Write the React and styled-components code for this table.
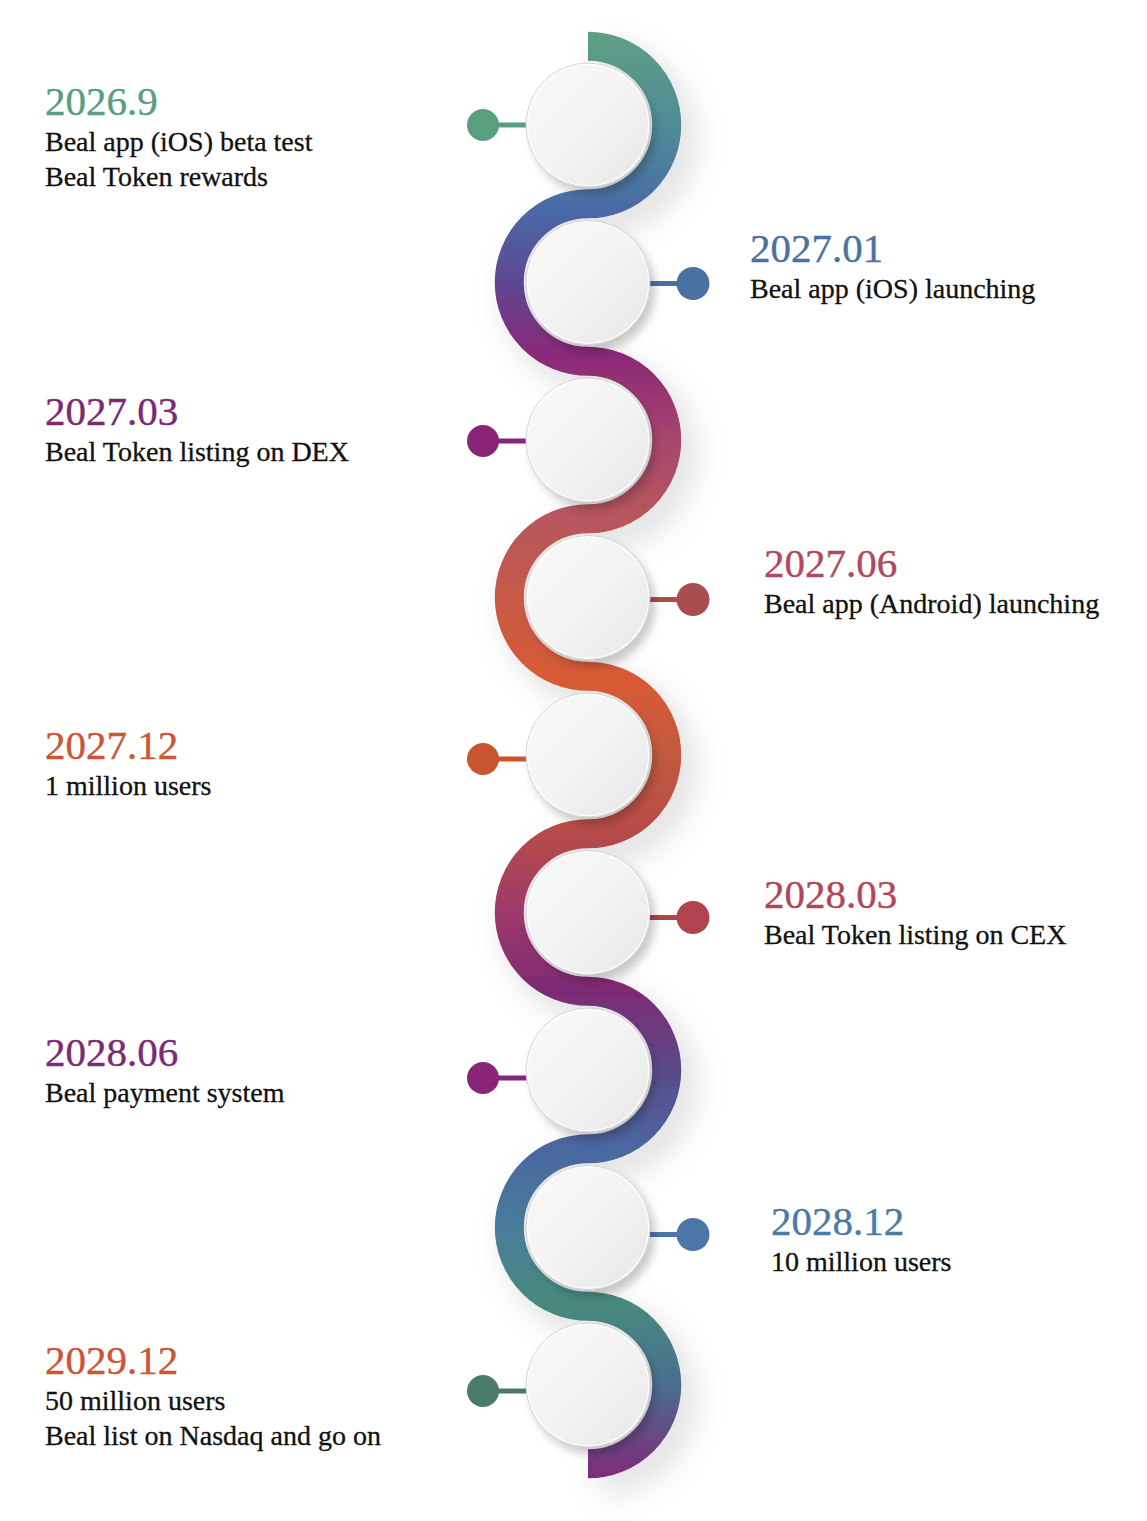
import React from 'react';
import styled, { createGlobalStyle } from 'styled-components';

const GlobalStyle = createGlobalStyle`
  html, body {
    margin: 0;
    padding: 0;
    background: #ffffff;
  }
  body {
    font-family: "Liberation Serif", "Times New Roman", serif;
    color: #111111;
  }
`;

const STEP = 157.5;
const TOP = 125;
const CX = 148;
const R = STEP / 2;

// one entry per circle on the ribbon, top to bottom
const milestones = [
  { year: '2026.9', lines: ['Beal app (iOS) beta test', 'Beal Token rewards'], color: '#5a9e80', dot: '#5a9e80', shift: 32, dotY: 0 },
  { year: '2027.01', lines: ['Beal app (iOS) launching'], color: '#4a72a0', dot: '#4873a0', shift: 21, indent: 10, dotY: 1 },
  { year: '2027.03', lines: ['Beal Token listing on DEX'], color: '#7d2a74', dot: '#8a2478', shift: 27, dotY: 1 },
  { year: '2027.06', lines: ['Beal app (Android) launching'], color: '#b04a5c', dot: '#a84e50', shift: 21, indent: 24, dotY: 2 },
  { year: '2027.12', lines: ['1 million users'], color: '#cc5535', dot: '#c8552f', shift: 46, dotY: 4 },
  { year: '2028.03', lines: ['Beal Token listing on CEX'], color: '#b0465a', dot: '#b0444e', shift: 37, indent: 24, dotY: 5 },
  { year: '2028.06', lines: ['Beal payment system'], color: '#7d2a74', dot: '#8a2478', shift: 38, dotY: 8 },
  { year: '2028.12', lines: ['10 million users'], color: '#4a7aa8', dot: '#4a76a8', shift: 49, indent: 31, dotY: 7 },
  { year: '2029.12', lines: ['50 million users', 'Beal list on Nasdaq and go on'], color: '#cc5535', dot: '#4a7a6a', shift: 31, dotY: 6 },
];

const ribbonStops = [
  [40, '#5e9e84'],
  [130, '#4f8a98'],
  [210, '#4a6aa6'],
  [283, '#5e4692'],
  [355, '#8a2878'],
  [440, '#a6476c'],
  [520, '#b6585c'],
  [598, '#c65a48'],
  [680, '#d85a35'],
  [755, '#c25a3e'],
  [830, '#b64c48'],
  [908, '#a03a6a'],
  [990, '#7e2a74'],
  [1068, '#5a4a88'],
  [1150, '#4a68a0'],
  [1227, '#4a7c9c'],
  [1300, '#4a8a7c'],
  [1385, '#4a6e90'],
  [1480, '#80287a'],
];

const Page = styled.main`
  display: grid;
  grid-template-columns: 440px 300px 1fr;
  grid-template-rows: repeat(9, ${STEP}px);
  padding: 46px 0 58px;
  width: 1147px;
  box-sizing: border-box;
`;

const Track = styled.svg`
  grid-column: 2;
  grid-row: 1 / -1;
  width: 300px;
  height: ${STEP * 9}px;
  overflow: visible;
  display: block;
`;

const Entry = styled.div`
  grid-column: ${(p) => (p.$side === 'left' ? 1 : 3)};
  grid-row: ${(p) => p.$row};
  margin-top: ${(p) => p.$shift}px;
  padding-left: ${(p) => (p.$side === 'left' ? 45 : p.$indent || 0)}px;
  display: flex;
  flex-direction: column;
`;

const Year = styled.div`
  font-size: 41px;
  line-height: 46px;
  color: ${(p) => p.$color};
  -webkit-text-stroke: 0.4px ${(p) => p.$color};
  white-space: nowrap;
`;

const Line = styled.div`
  font-size: 28px;
  line-height: 35px;
  color: #111111;
  -webkit-text-stroke: 0.3px #111111;
  white-space: nowrap;
`;

function ribbonPath() {
  let d = `M ${CX} ${TOP - R}`;
  milestones.forEach((m, i) => {
    const yEnd = TOP + i * STEP + R;
    const sweep = i % 2 === 0 ? 1 : 0;
    d += ` A ${R} ${R} 0 0 ${sweep} ${CX} ${yEnd}`;
  });
  return d;
}

function Timeline() {
  return (
    <Track viewBox={`0 46 300 ${STEP * 9}`}>
      <defs>
        <linearGradient id="ribbon" gradientUnits="userSpaceOnUse" x1="0" y1="30" x2="0" y2="1485">
          {ribbonStops.map(([y, c]) => (
            <stop key={y} offset={(y - 30) / 1455} stopColor={c} />
          ))}
        </linearGradient>
        <linearGradient id="disc" x1="0" y1="0" x2="1" y2="1">
          <stop offset="0" stopColor="#fafafa" />
          <stop offset="0.55" stopColor="#f2f2f2" />
          <stop offset="1" stopColor="#e6e6e6" />
        </linearGradient>
        <filter id="haze" x="-40%" y="-5%" width="180%" height="110%">
          <feDropShadow dx="12" dy="14" stdDeviation="16" floodColor="#000" floodOpacity="0.14" />
        </filter>
        <filter id="lift" x="-30%" y="-30%" width="160%" height="160%">
          <feDropShadow dx="5" dy="7" stdDeviation="5" floodColor="#000" floodOpacity="0.22" />
        </filter>
      </defs>

      <g filter="url(#haze)">
        <path d={ribbonPath()} fill="none" stroke="url(#ribbon)" strokeWidth="29" />
      </g>

      {milestones.map((m, i) => {
        const cy = TOP + i * STEP;
        const left = i % 2 === 0;
        const dy = cy + m.dotY;
        return (
          <g key={m.year}>
            {left ? (
              <>
                <rect x="56" y={dy - 2.5} width="34" height="5" fill={m.dot} />
                <circle cx="43" cy={dy} r="16" fill={m.dot} />
              </>
            ) : (
              <>
                <rect x="206" y={dy - 2.5} width="36" height="5" fill={m.dot} />
                <circle cx="253" cy={dy} r="16.5" fill={m.dot} />
              </>
            )}
            <circle cx={CX} cy={cy} r="62" fill="url(#disc)" filter="url(#lift)" />
            <circle cx={CX} cy={cy} r="61" fill="none" stroke="#ffffff" strokeWidth="2" opacity="0.9" />
            <circle cx={CX} cy={cy} r="62" fill="none" stroke="#d4d4d4" strokeWidth="1" />
          </g>
        );
      })}
    </Track>
  );
}

export default function App() {
  return (
    <>
      <GlobalStyle />
      <Page>
        <Timeline />
        {milestones.map((m, i) => (
          <Entry
            key={m.year}
            $side={i % 2 === 0 ? 'left' : 'right'}
            $row={i + 1}
            $shift={m.shift}
            $indent={m.indent}
          >
            <Year $color={m.color}>{m.year}</Year>
            {m.lines.map((l) => (
              <Line key={l}>{l}</Line>
            ))}
          </Entry>
        ))}
      </Page>
    </>
  );
}
